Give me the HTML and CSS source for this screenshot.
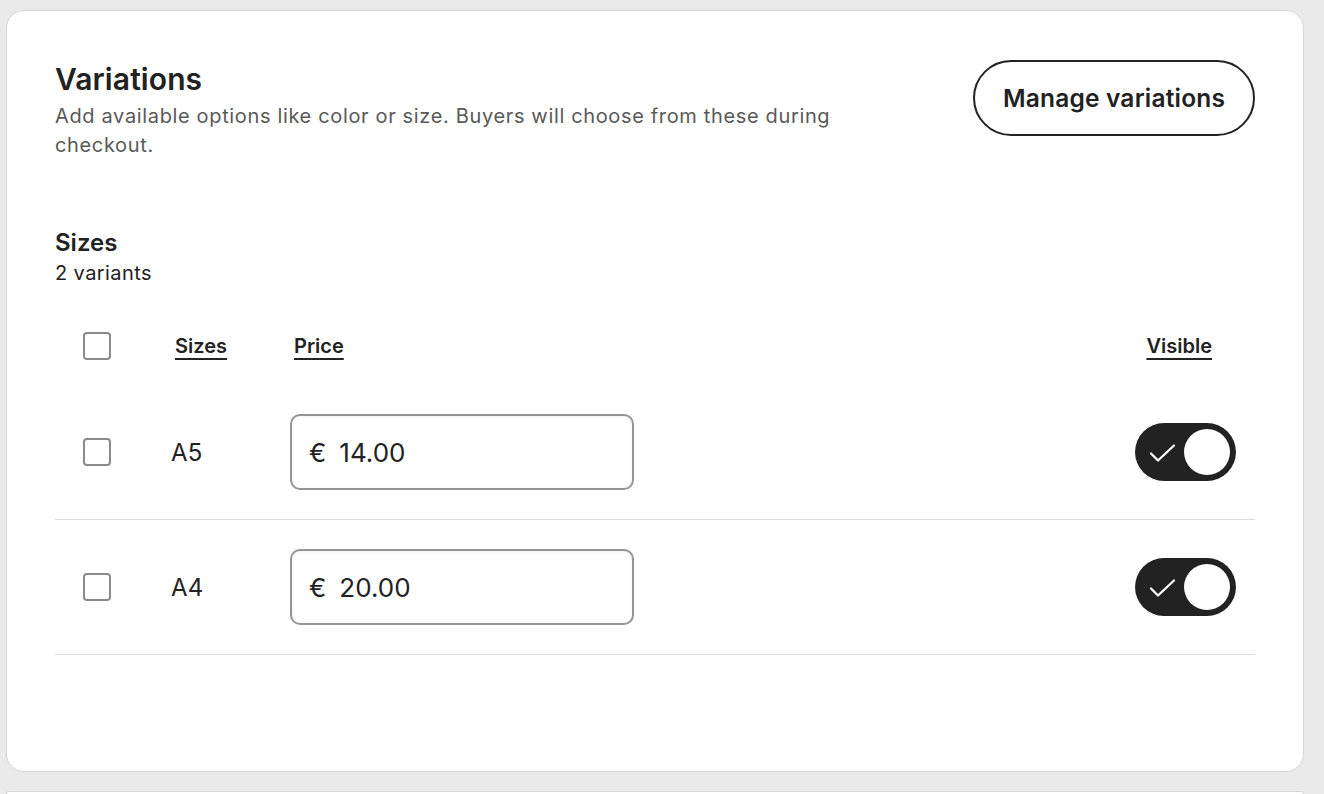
FILE: index.html
```html
<!DOCTYPE html>
<html lang="en">
<head>
<meta charset="utf-8">
<title>Variations</title>
<link rel="stylesheet" href="styles.css">
</head>
<body>
<div class="page">
  <section class="card">
    <div class="head">
      <div class="head-text">
        <h2 class="title">Variations</h2>
        <p class="subtitle">Add available options like color or size. Buyers will choose from these during checkout.</p>
      </div>
      <button class="btn-outline" type="button">Manage variations</button>
    </div>

    <div class="group">
      <h3 class="group-title">Sizes</h3>
      <div class="group-count">2 variants</div>
    </div>

    <div class="table">
      <div class="row row-head">
        <div class="c-check"><span class="checkbox"></span></div>
        <div class="c-name"><span class="th th-name">Sizes</span></div>
        <div class="c-price"><span class="th th-price">Price</span></div>
        <div class="c-fill"></div>
        <div class="c-vis"><span class="th th-vis">Visible</span></div>
      </div>

      <div class="row row-item">
        <div class="c-check"><span class="checkbox"></span></div>
        <div class="c-name"><span class="cell-name">A5</span></div>
        <div class="c-price">
          <label class="price-input"><span class="cur">€</span><span class="val">14.00</span></label>
        </div>
        <div class="c-fill"></div>
        <div class="c-vis">
          <span class="toggle">
            <svg class="tick" width="28" height="20" viewBox="0 0 28 20"><path d="M2 10.5 L9 17.5 L25 2.5" fill="none" stroke="#fff" stroke-width="2.2" stroke-linecap="round" stroke-linejoin="round"/></svg>
            <span class="knob"></span>
          </span>
        </div>
      </div>

      <div class="row row-item">
        <div class="c-check"><span class="checkbox"></span></div>
        <div class="c-name"><span class="cell-name">A4</span></div>
        <div class="c-price">
          <label class="price-input"><span class="cur">€</span><span class="val">20.00</span></label>
        </div>
        <div class="c-fill"></div>
        <div class="c-vis">
          <span class="toggle">
            <svg class="tick" width="28" height="20" viewBox="0 0 28 20"><path d="M2 10.5 L9 17.5 L25 2.5" fill="none" stroke="#fff" stroke-width="2.2" stroke-linecap="round" stroke-linejoin="round"/></svg>
            <span class="knob"></span>
          </span>
        </div>
      </div>
    </div>
  </section>
  <section class="card card-next"></section>
</div>
</body>
</html>
```

FILE: styles.css
```css
* { box-sizing: border-box; }
html, body { margin: 0; padding: 0; }
body {
  background: #eaeaea;
  font-family: Inter, "Noto Sans", Arial, sans-serif;
  color: #222;
  height: 794px;
  overflow: hidden;
}
.page {
  padding: 10px 20px 0 6px;
  display: flex;
  flex-direction: column;
  gap: 19px;
}
.card {
  width: 1298px;
  background: #fff;
  border: 1px solid #d6d6d6;
  border-radius: 18px;
  padding: 48px 48px 116px 48px;
}
.card-next { height: 3px; padding: 0; border-bottom: none; border-radius: 18px 18px 0 0; }

.head {
  display: flex;
  justify-content: space-between;
  align-items: flex-start;
}
.head-text { width: 800px; }
.title {
  margin: 0;
  font-size: 30px;
  line-height: 40px;
  font-weight: 600;
  letter-spacing: 0.1px;
}
.subtitle {
  margin: 3px 0 0;
  font-size: 20px;
  line-height: 29px;
  color: #595959;
  letter-spacing: 0.65px;
}
.btn-outline {
  width: 282px;
  height: 76px;
  margin-top: 1px;
  border: 2px solid #222;
  border-radius: 38px;
  background: #fff;
  color: #222;
  font-family: inherit;
  font-size: 24.5px;
  font-weight: 600;
  letter-spacing: 0.2px;
}

.group { margin-top: 67px; }
.group-title {
  margin: 0;
  font-size: 24px;
  line-height: 32px;
  font-weight: 600;
}
.group-count {
  font-size: 20px;
  line-height: 28px;
  letter-spacing: 0.4px;
}

.table { margin-top: 20px; }
.row {
  display: flex;
  align-items: center;
}
.row-head { height: 78px; }
.row-item {
  height: 135px;
  border-bottom: 1px solid #dcdcdc;
}
.c-check { width: 105px; padding-left: 28px; display: flex; }
.c-name { width: 130px; }
.c-price { width: 344px; }
.c-fill { flex: 1; }
.c-vis { width: 160px; display: flex; justify-content: flex-end; }

.checkbox {
  width: 28px;
  height: 28px;
  border: 2px solid #8a8a8a;
  border-radius: 4px;
  background: #fff;
}
.th {
  font-size: 20px;
  font-weight: 600;
  text-decoration: underline;
  text-decoration-thickness: 2px;
  text-underline-offset: 5px;
}
.th-name { padding-left: 15px; }
.th-price { padding-left: 4px; }
.th-vis { padding-right: 43px; }
.cell-name {
  padding-left: 11px;
  font-size: 24px;
  letter-spacing: 0.3px;
}
.price-input {
  display: flex;
  align-items: center;
  height: 76px;
  border: 2px solid #959595;
  border-radius: 10px;
  padding-left: 17px;
  font-size: 26px;
  color: #222;
  box-shadow: inset 0 1px 3px rgba(0,0,0,0.06);
}
.cur { margin-right: 13px; }
.toggle {
  position: relative;
  display: flex;
  align-items: center;
  width: 101px;
  height: 58px;
  margin-right: 19px;
  border-radius: 29px;
  background: #222;
}
.tick { position: absolute; left: 14px; top: 20px; }
.knob {
  position: absolute;
  right: 6px;
  top: 6px;
  width: 46px;
  height: 46px;
  border-radius: 50%;
  background: #fff;
}
```
